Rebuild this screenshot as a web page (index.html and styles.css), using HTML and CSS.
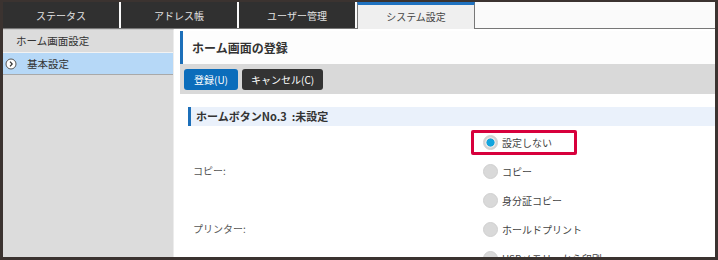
FILE: index.html
```html
<!DOCTYPE html>
<html lang="ja">
<head>
    <meta charset="UTF-8">
    <title>システム設定 - ホーム画面の登録</title>
    <link rel="stylesheet" href="styles.css">
</head>
<body>
    <div class="screen">
        <!-- Top tabs -->
        <nav class="tabs">
            <div class="tab">ステータス</div>
            <div class="tab">アドレス帳</div>
            <div class="tab">ユーザー管理</div>
            <div class="tab active">システム設定</div>
        </nav>

        <div class="main">
            <!-- Side menu -->
            <aside class="side">
                <div class="side-head">ホーム画面設定</div>
                <div class="side-item selected">
                    <svg class="arrow" width="12" height="12" viewBox="0 0 12 12">
                        <circle cx="6" cy="6" r="5" fill="#fff" stroke="#555" stroke-width="1"/>
                        <path d="M5 3.6 L7.2 6 L5 8.4" fill="none" stroke="#333" stroke-width="1.2"/>
                    </svg>
                    <span>基本設定</span>
                </div>
            </aside>

            <!-- Content -->
            <section class="content">
                <h1 class="page-title">ホーム画面の登録</h1>
                <div class="toolbar">
                    <button type="button" class="btn primary">登録(U)</button>
                    <button type="button" class="btn">キャンセル(C)</button>
                </div>

                <h2 class="section-title">ホームボタンNo.3 &nbsp;:未設定</h2>

                <div class="form-grid">
                    <div class="field-label copy-label">コピー:</div>
                    <div class="field-label print-label">プリンター:</div>

                    <label class="option highlight"><span class="radio checked"></span>設定しない</label>
                    <label class="option"><span class="radio"></span>コピー</label>
                    <label class="option"><span class="radio"></span>身分証コピー</label>
                    <label class="option"><span class="radio"></span>ホールドプリント</label>
                    <label class="option"><span class="radio"></span>USBメモリーから印刷</label>
                </div>
            </section>
        </div>
    </div>
</body>
</html>
```

FILE: styles.css
```css
/* Base */
* {
    margin: 0;
    padding: 0;
    box-sizing: border-box;
}
body {
    font-family: "Noto Sans CJK JP", "Noto Sans", sans-serif;
    color: #333;
    background: #fff;
}

.screen {
    width: 718px;
    height: 260px;
    border: 3px solid #3b3330;
    border-top-width: 2px;
    background: #fcfcfc;
    display: flex;
    flex-direction: column;
    overflow: hidden;
}

/* Tabs */
.tabs {
    display: flex;
    gap: 2px;
    height: 27px;
    flex: none;
    background: #fafafa;
    border-bottom: 1px solid #777;
}
.tab {
    width: 116px;
    height: 26px;
    background: #303030;
    color: #e2e2e2;
    font-size: 10px;
    display: flex;
    align-items: center;
    justify-content: center;
}
.tab.active {
    width: 118px;
    height: 27px;
    background: #efefef;
    color: #444;
    border-top: 3px solid #1f72c0;
    border-left: 1px solid #777;
    border-right: 1px solid #777;
    padding-bottom: 2px;
}

.main {
    display: flex;
    flex: 1;
    min-height: 0;
}

/* Side menu */
.side {
    width: 171px;
    flex: none;
    background: #dcdcdc;
    border-right: 1px solid #ececec;
    border-top: 1px solid #c9c9c9;
}
.side-head {
    height: 23px;
    padding-left: 13px;
    font-size: 10.5px;
    line-height: 22px;
    color: #333;
    border-bottom: 1px solid #f2f2f2;
}
.side-item {
    height: 22px;
    display: flex;
    align-items: center;
    gap: 10px;
    padding-left: 2px;
    font-size: 10.5px;
    color: #333;
}
.side-item.selected {
    background: #b6d8f7;
    border-bottom: 1px solid #a9a9a9;
}
.arrow {
    flex: none;
}

/* Content */
.content {
    flex: 1;
    padding: 2px 0 0 6px;
    background: #fff;
}
.page-title {
    height: 33px;
    border-left: 3px solid #1c6fb9;
    padding-left: 9px;
    font-size: 12px;
    font-weight: bold;
    line-height: 33px;
    color: #333;
    background: #fdfdfd;
}
.toolbar {
    height: 30px;
    background: #d9d9d9;
    padding: 5px 4px;
    display: flex;
    gap: 4px;
}
.btn {
    height: 21px;
    padding: 0 9px;
    border: none;
    border-radius: 3px;
    background: #333;
    color: #fff;
    font-family: inherit;
    font-size: 10px;
    cursor: pointer;
}
.btn.primary {
    background: #0b6dbb;
    width: 54px;
}

.section-title {
    margin: 13px 0 0 8px;
    height: 19px;
    border-left: 3px solid #1c6fb9;
    background: #eaf1fb;
    padding-left: 5px;
    font-size: 11px;
    font-weight: bold;
    line-height: 19px;
    color: #333;
}

/* Form */
.form-grid {
    display: grid;
    grid-template-columns: 278px auto;
    grid-auto-rows: 29px;
    margin: 2px 0 0 13px;
    justify-content: start;
}
.field-label {
    grid-column: 1;
    font-size: 10px;
    color: #555;
    display: flex;
    align-items: center;
}
.copy-label {
    grid-row: 2;
    margin-top: -3px;
}
.print-label {
    grid-row: 4;
    margin-top: -2px;
}
.option {
    grid-column: 2;
    height: 25px;
    margin: 2px 0;
    padding: 0 10px 0 9px;
    border: 3px solid transparent;
    border-radius: 2px;
    display: flex;
    align-items: center;
    gap: 4px;
    font-size: 10px;
    color: #444;
    width: 106px;
    white-space: nowrap;
}
.option.highlight {
    border-color: #d7003c;
}
.radio {
    width: 15px;
    height: 15px;
    border-radius: 50%;
    background: #d9d9d9;
    border: 1px solid #d0d0d0;
    flex: none;
}
.radio.checked {
    background: radial-gradient(circle, #13a5de 0 3.8px, #e6e6e6 4.3px 5px, #d4d4d4 5.5px);
}
```
